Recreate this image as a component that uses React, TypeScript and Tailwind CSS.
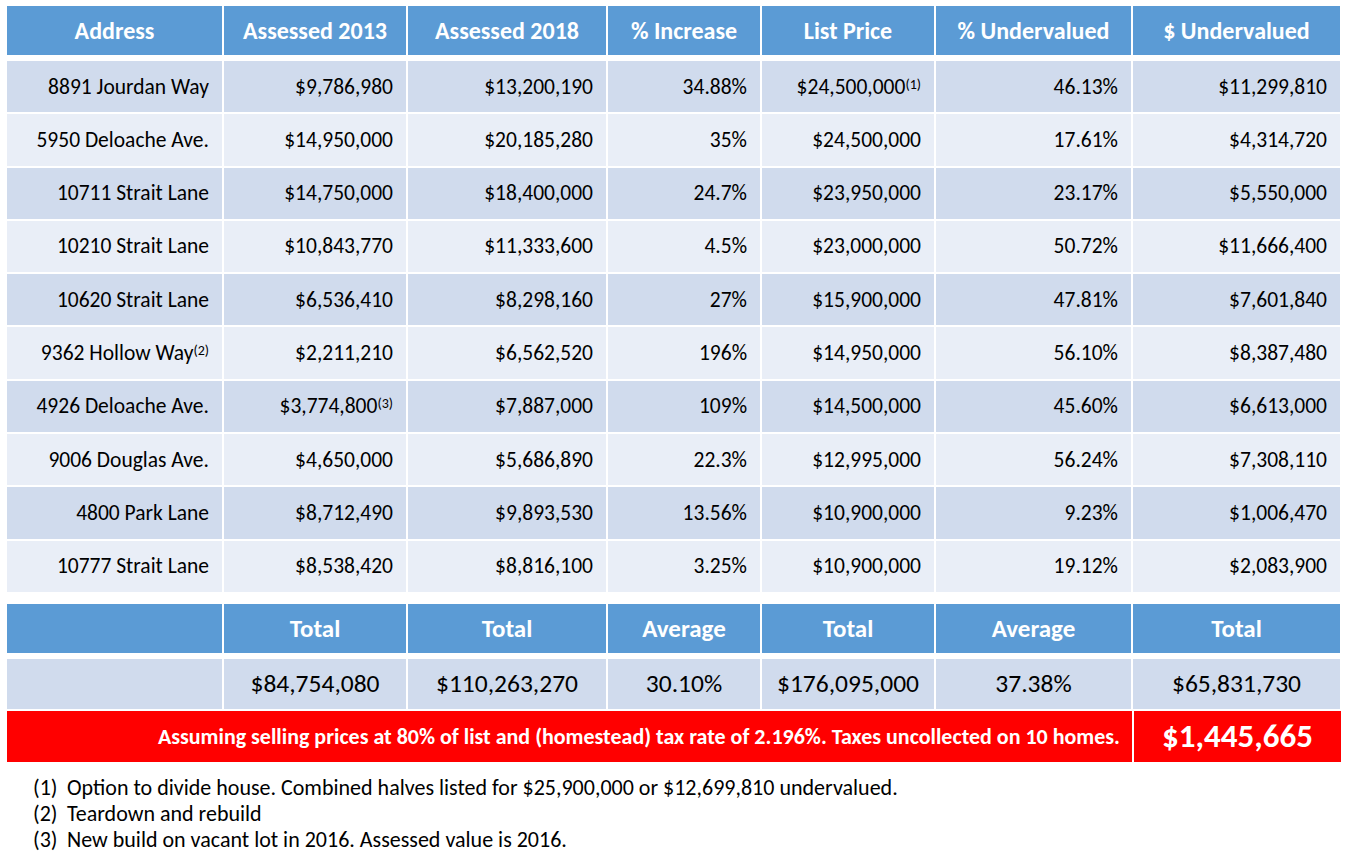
import React from 'react';

type Row = {
  address: string;
  addrNote?: string;
  a13: string;
  a13Note?: string;
  a18: string;
  inc: string;
  list: string;
  listNote?: string;
  pct: string;
  under: string;
};

const rows: Row[] = [
  { address: '8891 Jourdan Way', a13: '$9,786,980', a18: '$13,200,190', inc: '34.88%', list: '$24,500,000', listNote: '(1)', pct: '46.13%', under: '$11,299,810' },
  { address: '5950 Deloache Ave.', a13: '$14,950,000', a18: '$20,185,280', inc: '35%', list: '$24,500,000', pct: '17.61%', under: '$4,314,720' },
  { address: '10711 Strait Lane', a13: '$14,750,000', a18: '$18,400,000', inc: '24.7%', list: '$23,950,000', pct: '23.17%', under: '$5,550,000' },
  { address: '10210 Strait Lane', a13: '$10,843,770', a18: '$11,333,600', inc: '4.5%', list: '$23,000,000', pct: '50.72%', under: '$11,666,400' },
  { address: '10620 Strait Lane', a13: '$6,536,410', a18: '$8,298,160', inc: '27%', list: '$15,900,000', pct: '47.81%', under: '$7,601,840' },
  { address: '9362 Hollow Way', addrNote: '(2)', a13: '$2,211,210', a18: '$6,562,520', inc: '196%', list: '$14,950,000', pct: '56.10%', under: '$8,387,480' },
  { address: '4926 Deloache Ave.', a13: '$3,774,800', a13Note: '(3)', a18: '$7,887,000', inc: '109%', list: '$14,500,000', pct: '45.60%', under: '$6,613,000' },
  { address: '9006 Douglas Ave.', a13: '$4,650,000', a18: '$5,686,890', inc: '22.3%', list: '$12,995,000', pct: '56.24%', under: '$7,308,110' },
  { address: '4800 Park Lane', a13: '$8,712,490', a18: '$9,893,530', inc: '13.56%', list: '$10,900,000', pct: '9.23%', under: '$1,006,470' },
  { address: '10777 Strait Lane', a13: '$8,538,420', a18: '$8,816,100', inc: '3.25%', list: '$10,900,000', pct: '19.12%', under: '$2,083,900' },
];

const headers = ['Address', 'Assessed 2013', 'Assessed 2018', '% Increase', 'List Price', '% Undervalued', '$ Undervalued'];
const totalsHead = ['', 'Total', 'Total', 'Average', 'Total', 'Average', 'Total'];
const totals = ['', '$84,754,080', '$110,263,270', '30.10%', '$176,095,000', '37.38%', '$65,831,730'];

const grid = 'grid grid-cols-[215px_182px_198px_152px_172px_195px_207px] gap-x-[2px]';

function Sup({ children }: { children: React.ReactNode }) {
  return <sup className="text-[14px] relative -top-[2px]">{children}</sup>;
}

export default function App() {
  return (
    <div className="w-[1350px] h-[862px] bg-white text-black font-['Carlito','Lato',sans-serif] pl-[7px] pt-[6px]">
      <div className={grid}>
        {headers.map((h) => (
          <div key={h} className="h-[49px] bg-[#5b9bd5] text-white font-bold text-[24px] flex items-center justify-center">
            {h}
          </div>
        ))}
      </div>

      <div className="mt-[6px] flex flex-col gap-y-[2px]">
        {rows.map((r, i) => {
          const bg = i % 2 === 0 ? 'bg-[#d0dbed]' : 'bg-[#e9eef7]';
          const cell = `h-[51.3px] ${bg} flex items-center justify-end pr-[13px] text-[21.5px]`;
          return (
            <div key={r.address} className={grid}>
              <div className={cell}>
                {r.address}
                {r.addrNote && <Sup>{r.addrNote}</Sup>}
              </div>
              <div className={cell}>
                {r.a13}
                {r.a13Note && <Sup>{r.a13Note}</Sup>}
              </div>
              <div className={cell}>{r.a18}</div>
              <div className={cell}>{r.inc}</div>
              <div className={cell}>
                {r.list}
                {r.listNote && <Sup>{r.listNote}</Sup>}
              </div>
              <div className={cell}>{r.pct}</div>
              <div className={cell}>{r.under}</div>
            </div>
          );
        })}
      </div>

      <div className={`${grid} mt-[12px]`}>
        {totalsHead.map((h, i) => (
          <div key={i} className="h-[49px] bg-[#5b9bd5] text-white font-bold text-[25px] flex items-center justify-center">
            {h}
          </div>
        ))}
      </div>

      <div className={`${grid} mt-[6px]`}>
        {totals.map((t, i) => (
          <div key={i} className="h-[50px] bg-[#d0dbed] text-[25.5px] flex items-center justify-center">
            {t}
          </div>
        ))}
      </div>

      <div className="mt-[2px] flex gap-x-[2px] w-[1334px]">
        <div className="flex-1 h-[51px] bg-[#ff0000] text-white font-bold text-[22px] flex items-center justify-end pr-[12px]">
          Assuming selling prices at 80% of list and (homestead) tax rate of 2.196%. Taxes uncollected on 10 homes.
        </div>
        <div className="w-[207px] h-[51px] bg-[#ff0000] text-white font-bold text-[33px] flex items-center justify-center">
          $1,445,665
        </div>
      </div>

      <div className="mt-[13px] pl-[26px] text-[22px] leading-[26px] flex flex-col">
        {[
          ['(1)', 'Option to divide house. Combined halves listed for $25,900,000 or $12,699,810 undervalued.'],
          ['(2)', 'Teardown and rebuild'],
          ['(3)', 'New build on vacant lot in 2016. Assessed value is 2016.'],
        ].map(([n, t]) => (
          <div key={n} className="flex">
            <span className="w-[34px]">{n}</span>
            <span>{t}</span>
          </div>
        ))}
      </div>
    </div>
  );
}
